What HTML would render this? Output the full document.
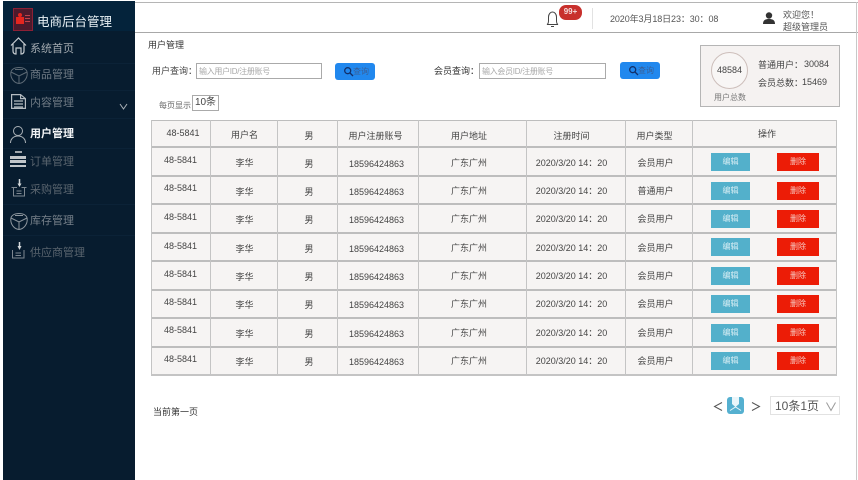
<!DOCTYPE html>
<html lang="zh">
<head>
<meta charset="utf-8">
<style>
html,body{margin:0;padding:0;background:#fff}
body{width:858px;height:480px;position:relative;overflow:hidden;font-family:"Liberation Sans","Noto Sans CJK SC",sans-serif;color:#333}
.a{position:absolute;white-space:nowrap}
#side{position:absolute;left:3px;top:1px;width:132px;height:479px;background:#071c2f}
.nav{position:absolute;left:30px;font-size:11px;line-height:14px;color:#8a939b;white-space:nowrap}
.sep{position:absolute;left:3px;width:132px;height:1px;background:#0b2237}
svg{position:absolute;overflow:visible}
.t{font-size:9px;line-height:11px;color:#444}
.btn{position:absolute;width:40px;height:17px;background:#2188ee;border-radius:3px;font-size:8px;line-height:17px;text-align:center;color:#3a5f96}
.inp{position:absolute;height:14px;border:1px solid #aaa;font-size:8px;line-height:15px;letter-spacing:-.3px;color:#a8a8a8;padding-left:2px;box-sizing:content-box}
.row{position:absolute;left:151px;width:685px;background:#f6f4f3;border-bottom:2px solid #bdbdbd;box-sizing:border-box}
.c{position:absolute;font-size:9px;line-height:11px;color:#444;text-align:center;white-space:nowrap}
.c1{left:0;width:59px}.c2{left:60px;width:67px}.c3{left:128px;width:60px}.c4{left:185px;width:81px}.c5{left:264px;width:108px}.c6{left:371px;width:99px}.c7{left:471px;width:67px}
.vl{position:absolute;top:120px;width:1px;height:256px;background:#c4c4c4}
.e{position:absolute;left:560px;top:5px;width:39px;height:18px;background:#53b0cb;color:#d9eef4;font-size:8px;line-height:18px;text-align:center}
.d{position:absolute;left:626px;top:5px;width:42px;height:18px;background:#ec1c06;color:#f6c8c0;font-size:8px;line-height:18px;text-align:center}
</style>
</head>
<body>
<div id="side"></div>
<div class="a" style="left:3px;top:1px;width:132px;height:30px;background:#04233b"></div>
<div class="a" style="left:13px;top:8px;width:20px;height:23px;background:#4e1a2c;border:1px solid #8c2035;box-sizing:border-box"></div>
<div class="a" style="left:18px;top:13px;width:4px;height:4px;background:#e5261f;border-radius:50%"></div>
<div class="a" style="left:16px;top:17px;width:8px;height:7px;background:#e5261f"></div>
<div class="a" style="left:25px;top:15px;width:5px;height:1px;background:#c0434b"></div>
<div class="a" style="left:25px;top:18px;width:5px;height:1px;background:#c0434b"></div>
<div class="a" style="left:25px;top:21px;width:5px;height:1px;background:#c0434b"></div>
<div class="a" style="left:37px;top:14px;font-size:12.500px;line-height:16px;color:#e9f1f5">电商后台管理</div>

<svg style="left:10px;top:37px" width="20" height="20" viewBox="0 0 20 20" fill="none" stroke="#c6ccd1" stroke-width="1.200"><path d="M1 8.500L8.500 1 16 8.500M3 7v7c0 2 1 3 3 3V11h5v6c2 0 3-1 3-3V7"/></svg>
<div class="nav" style="top:42px;color:#a2a9af">系统首页</div>
<div class="sep" style="top:63px"></div>
<svg style="left:10px;top:67px" width="18" height="17" viewBox="0 0 18 17" fill="none" stroke="#5d6a75" stroke-width="1"><path d="M9 .5C5 .5 1 2 .8 6c-.3 5 3 10 8.200 10.500C14 16 17.500 11 17.200 6 17 2 13 .5 9 .5zM1 5l8 4 8-4M9 9v7.500M5 2.500l8 0"/></svg>
<div class="nav" style="top:68px;color:#6f7a84">商品管理</div>
<div class="sep" style="top:90px"></div>
<svg style="left:11px;top:94px" width="15" height="15" viewBox="0 0 15 15" fill="none" stroke="#b4bbc1" stroke-width="1.200"><path d="M.6.6h9l4.800 4v9.800H.6zM9.600.6v4h4.800M3 7h9M3 10h9M3 13h9"/></svg>
<div class="nav" style="top:96px;color:#6f7a84">内容管理</div>
<svg style="left:120px;top:104px" width="7" height="6" viewBox="0 0 7 6" fill="none" stroke="#aab1b7" stroke-width="1"><path d="M0 0l3.500 5L7 0"/></svg>
<div class="sep" style="top:118px"></div>

<svg style="left:10px;top:126px" width="17" height="18" viewBox="0 0 17 18" fill="none" stroke="#a9b0b6" stroke-width="1"><circle cx="8" cy="5" r="4.500"/><path d="M.5 17c0-4 3-7 7.500-7s7.500 3 7.500 7"/></svg>
<div class="nav" style="top:127px;color:#f2f4f6;font-weight:bold">用户管理</div>
<div class="sep" style="top:148px"></div>
<div class="a" style="left:15px;top:151px;width:7px;height:2px;background:#9ea5ab"></div>
<div class="a" style="left:10px;top:156px;width:16px;height:3px;background:#c0c5c9"></div>
<div class="a" style="left:10px;top:160px;width:16px;height:3px;background:#c0c5c9"></div>
<div class="a" style="left:10px;top:165px;width:16px;height:2px;background:#c0c5c9"></div>
<div class="nav" style="top:155px;color:#59646e">订单管理</div>
<svg style="left:11px;top:179px" width="16" height="18" viewBox="0 0 16 18" fill="none" stroke="#7d8790" stroke-width="1"><path d="M.5 8.500h5.500M10.500 8.500h5M2.500 9v8h11V9M5.500 12h5M5.500 14.500h5"/><path d="M8.500 0v5" stroke="#d4d8db" stroke-width="1.500"/><path d="M6.500 4.500h4L8.500 8z" fill="#d4d8db" stroke="none"/></svg>
<div class="nav" style="top:183px;color:#59646e">采购管理</div>
<div class="sep" style="top:204px"></div>
<svg style="left:10px;top:213px" width="18" height="17" viewBox="0 0 18 17" fill="none" stroke="#8d969e" stroke-width="1"><path d="M9 .5C5 .5 1 2 .8 6c-.3 5 3 10 8.200 10.500C14 16 17.500 11 17.200 6 17 2 13 .5 9 .5zM1 5l8 4 8-4M9 9v7.500M5 2.500l8 0"/></svg>
<div class="nav" style="top:214px;color:#76808a">库存管理</div>
<div class="sep" style="top:235px"></div>
<svg style="left:12px;top:242px" width="13" height="17" viewBox="0 0 13 17" fill="none" stroke="#7d8790" stroke-width="1"><path d="M.5 8v8h11.500V8M3.500 11h5.500M3.500 13.500h5.500"/><path d="M7.500 0v4.500" stroke="#d4d8db" stroke-width="1.500"/><path d="M5.500 4h4L7.500 8z" fill="#d4d8db" stroke="none"/></svg>
<div class="nav" style="top:246px;color:#59646e">供应商管理</div>

<!-- header -->
<div class="a" style="left:135px;top:2px;width:723px;height:1px;background:#b5b5b5"></div>
<div class="a" style="left:135px;top:32px;width:723px;height:1px;background:#a8a8a8"></div>
<div class="a" style="left:856px;top:2px;width:1px;height:478px;background:#c8c8c8"></div>
<svg style="left:546px;top:11px" width="14" height="17" viewBox="0 0 14 17" fill="none" stroke="#444" stroke-width="1"><path d="M1 13.500c1-.5 1.500-2 1.500-4V6C2.500 3 4.500 1 6.500 1s4 2 4 5v3.500c0 2 .5 3.500 1.500 4z"/><path d="M5 15.500h3"/></svg>
<div class="a" style="left:559px;top:5px;width:23px;height:15px;background:#c8302c;border-radius:7px;color:#f4dcdc;font-size:8px;line-height:14px;text-align:center;font-weight:bold">99+</div>
<div class="a" style="left:592px;top:8px;width:1px;height:21px;background:#e2e2e2"></div>
<div class="a t" style="left:610px;top:14px;color:#555;letter-spacing:-.1px">2020年3月18日23：30：08</div>
<svg style="left:763px;top:12px" width="12" height="12" viewBox="0 0 12 12" fill="#333"><circle cx="6" cy="3.500" r="3.200"/><path d="M0 12c0-4 2.500-5 6-5s6 1 6 5z"/></svg>
<div class="a t" style="left:783px;top:9px;line-height:12px;color:#555">欢迎您！<br>超级管理员</div>

<!-- filters -->
<div class="a t" style="left:148px;top:40px;color:#333">用户管理</div>
<div class="a t" style="left:152px;top:66px;color:#444">用户查询：</div>
<div class="inp" style="left:196px;top:63px;width:122px">输入用户ID/注册账号</div>
<div class="btn" style="left:335px;top:63px"><svg style="left:9px;top:4px" width="9" height="9" viewBox="0 0 9 9" fill="none" stroke="#12306a" stroke-width="1.300"><circle cx="3.700" cy="3.700" r="3"/><path d="M6 6l3 3"/></svg><span style="padding-left:12px">查询</span></div>
<div class="a t" style="left:434px;top:66px;color:#333">会员查询：</div>
<div class="inp" style="left:479px;top:63px;width:123px">输入会员ID/注册账号</div>
<div class="btn" style="left:620px;top:62px"><svg style="left:9px;top:4px" width="9" height="9" viewBox="0 0 9 9" fill="none" stroke="#12306a" stroke-width="1.300"><circle cx="3.700" cy="3.700" r="3"/><path d="M6 6l3 3"/></svg><span style="padding-left:12px">查询</span></div>
<div class="a" style="left:159px;top:100px;font-size:8px;line-height:11px;color:#666">每页显示</div>
<div class="a" style="left:192px;top:95px;width:25px;height:14px;border:1px solid #aaa;font-size:10px;line-height:14px;text-align:center;color:#444">10条</div>

<!-- stats -->
<div class="a" style="left:700px;top:45px;width:138px;height:60px;background:#f5f2f1;border:1px solid #b5b5b5"></div>
<div class="a" style="left:711px;top:52px;width:35px;height:35px;border:1px solid #cdbfbb;border-radius:50%;font-size:9px;line-height:35px;text-align:center;color:#444;background:#f8f6f5">48584</div>
<div class="a" style="left:714px;top:92px;font-size:8px;line-height:11px;color:#777">用户总数</div>
<div class="a t" style="left:758px;top:60px">普通用户：</div>
<div class="a t" style="left:804px;top:59px">30084</div>
<div class="a t" style="left:758px;top:78px">会员总数：</div>
<div class="a t" style="left:802px;top:77px">15469</div>

<!-- table -->
<div class="a" style="left:151px;top:120px;width:685px;height:256px;background:#f6f4f3;border:1px solid #bdbdbd;box-sizing:border-box"></div>

<div class="row" style="top:120px;height:28px;border-top:1px solid #bdbdbd">
<div class="c" style="left:0;width:64px;top:7px">48-5841</div><div class="c c2" style="top:9px">用户名</div><div class="c c3" style="top:10px">男</div><div class="c c4" style="top:10px;left:184px">用户注册账号</div><div class="c c5" style="top:10px">用户地址</div><div class="c c6" style="top:10px">注册时间</div><div class="c c7" style="top:10px;left:470px">用户类型</div><div class="c" style="left:544px;width:144px;top:8px">操作</div></div>

<div class="row" style="top:148px;height:29px">
<div class="c c1" style="top:7px">48-5841</div><div class="c c2" style="top:10px">李华</div><div class="c c3" style="top:11px">男</div><div class="c c4" style="top:11px">18596424863</div><div class="c c5" style="top:10px">广东广州</div><div class="c c6" style="top:10px">2020/3/20 14：20</div><div class="c c7" style="top:10px">会员用户</div><div class="e">编辑</div><div class="d">删除</div></div>

<div class="row" style="top:177px;height:28px">
<div class="c c1" style="top:6px">48-5841</div><div class="c c2" style="top:10px">李华</div><div class="c c3" style="top:10px">男</div><div class="c c4" style="top:10px">18596424863</div><div class="c c5" style="top:9px">广东广州</div><div class="c c6" style="top:9px">2020/3/20 14：20</div><div class="c c7" style="top:9px">普通用户</div><div class="e">编辑</div><div class="d">删除</div></div>

<div class="row" style="top:205px;height:29px">
<div class="c c1" style="top:7px">48-5841</div><div class="c c2" style="top:10px">李华</div><div class="c c3" style="top:10px">男</div><div class="c c4" style="top:10px">18596424863</div><div class="c c5" style="top:9px">广东广州</div><div class="c c6" style="top:9px">2020/3/20 14：20</div><div class="c c7" style="top:9px">会员用户</div><div class="e">编辑</div><div class="d">删除</div></div>

<div class="row" style="top:234px;height:28px">
<div class="c c1" style="top:7px">48-5841</div><div class="c c2" style="top:10px">李华</div><div class="c c3" style="top:10px">男</div><div class="c c4" style="top:10px">18596424863</div><div class="c c5" style="top:9px">广东广州</div><div class="c c6" style="top:9px">2020/3/20 14：20</div><div class="c c7" style="top:9px">会员用户</div><div class="e" style="top:4px">编辑</div><div class="d" style="top:4px">删除</div></div>

<div class="row" style="top:262px;height:29px">
<div class="c c1" style="top:7px">48-5841</div><div class="c c2" style="top:10px">李华</div><div class="c c3" style="top:10px">男</div><div class="c c4" style="top:10px">18596424863</div><div class="c c5" style="top:9px">广东广州</div><div class="c c6" style="top:9px">2020/3/20 14：20</div><div class="c c7" style="top:9px">会员用户</div><div class="e">编辑</div><div class="d">删除</div></div>

<div class="row" style="top:291px;height:28px">
<div class="c c1" style="top:6px">48-5841</div><div class="c c2" style="top:9px">李华</div><div class="c c3" style="top:9px">男</div><div class="c c4" style="top:9px">18596424863</div><div class="c c5" style="top:8px">广东广州</div><div class="c c6" style="top:8px">2020/3/20 14：20</div><div class="c c7" style="top:8px">会员用户</div><div class="e" style="top:4px">编辑</div><div class="d" style="top:4px">删除</div></div>

<div class="row" style="top:319px;height:29px">
<div class="c c1" style="top:6px">48-5841</div><div class="c c2" style="top:10px">李华</div><div class="c c3" style="top:10px">男</div><div class="c c4" style="top:10px">18596424863</div><div class="c c5" style="top:9px">广东广州</div><div class="c c6" style="top:9px">2020/3/20 14：20</div><div class="c c7" style="top:9px">会员用户</div><div class="e">编辑</div><div class="d">删除</div></div>

<div class="row" style="top:348px;height:28px;border-bottom:2px solid #c4c4c4">
<div class="c c1" style="top:6px">48-5841</div><div class="c c2" style="top:9px">李华</div><div class="c c3" style="top:9px">男</div><div class="c c4" style="top:9px">18596424863</div><div class="c c5" style="top:8px">广东广州</div><div class="c c6" style="top:8px">2020/3/20 14：20</div><div class="c c7" style="top:8px">会员用户</div><div class="e" style="top:4px">编辑</div><div class="d" style="top:4px">删除</div></div>

<div class="vl" style="left:151px"></div><div class="vl" style="left:210px"></div><div class="vl" style="left:277px"></div><div class="vl" style="left:337px"></div><div class="vl" style="left:418px"></div><div class="vl" style="left:526px"></div><div class="vl" style="left:625px"></div><div class="vl" style="left:692px"></div><div class="vl" style="left:836px"></div>

<!-- footer -->
<div class="a t" style="left:153px;top:407px;color:#333">当前第一页</div>
<svg style="left:714px;top:402px" width="8" height="9" viewBox="0 0 8 9" fill="none" stroke="#555" stroke-width="1"><path d="M8 .5L.5 4.500 8 8.500"/></svg>
<div class="a" style="left:727px;top:397px;width:17px;height:17px;background:#55b0d0;border-radius:3px"></div>
<svg style="left:727px;top:397px" width="17" height="17" viewBox="0 0 17 17" fill="none"><path d="M5 0h7v7l-3.500 3L5 7z" fill="#eaf6fa"/><path d="M3 13.500l5.500-3.500 5.500 3.500" stroke="#eaf6fa" stroke-width="1"/></svg>
<svg style="left:752px;top:402px" width="8" height="9" viewBox="0 0 8 9" fill="none" stroke="#555" stroke-width="1"><path d="M0 .5L7.500 4.500 0 8.500"/></svg>
<div class="a" style="left:770px;top:396px;width:70px;height:19px;border:1px solid #e2e2e2;box-sizing:border-box"></div>
<div class="a" style="left:775px;top:399px;font-size:12px;line-height:14px;color:#555">10条1页</div>
<svg style="left:826px;top:402px" width="10" height="9" viewBox="0 0 10 9" fill="none" stroke="#999" stroke-width="1"><path d="M.5 .5L5 8.500 9.500 .5"/></svg>
</body>
</html>
